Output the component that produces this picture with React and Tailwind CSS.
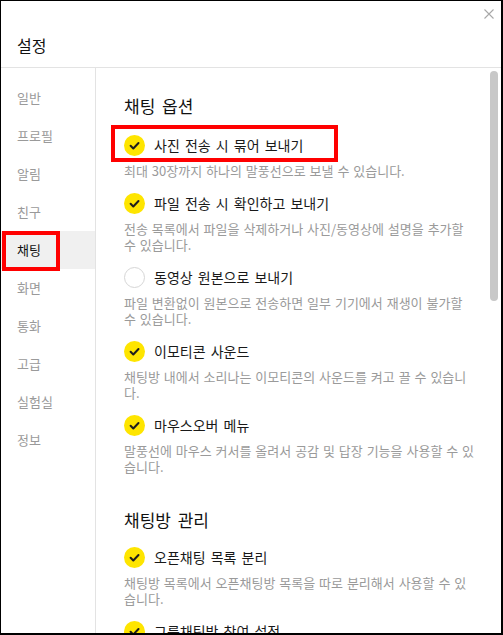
import React from "react";

const FONT = { fontFamily: '"Noto Sans CJK KR", "Noto Sans", sans-serif' };

function Check({ on }) {
  if (!on) {
    return <div className="w-[21px] h-[21px] rounded-full border border-[#d6d6d6] bg-white shrink-0" />;
  }
  return (
    <div className="w-[21px] h-[21px] rounded-full bg-[#fee500] shrink-0 flex items-center justify-center">
      <svg width="21" height="21" viewBox="0 0 21 21">
        <path d="M6.6 10.8 L9.3 13.5 L14.5 8" fill="none" stroke="#1e1e1e" strokeWidth="2" strokeLinecap="round" strokeLinejoin="round" />
      </svg>
    </div>
  );
}

function Option({ on, label, desc, boxed, first }) {
  return (
    <div className={first ? "" : "mt-[14px]"}>
      <div className="relative flex items-center h-[20px]">
        <Check on={on} />
        <span className="ml-[9px] text-[14px] leading-[20px] text-[#191919] whitespace-nowrap [word-spacing:2px]">{label}</span>
        {boxed && (
          <div className="absolute left-[-13px] top-[-10px] w-[227px] h-[37px] border-4 border-[#ff0000]" />
        )}
      </div>
      {desc && (
        <div className="mt-[8px] text-[13px] leading-[16px] text-[#9a9a9a] whitespace-nowrap [word-spacing:1px]">
          {desc.map((l, i) => (
            <div key={i}>{l}</div>
          ))}
        </div>
      )}
    </div>
  );
}

const menu = ["일반", "프로필", "알림", "친구", "채팅", "화면", "통화", "고급", "실험실", "정보"];

export default function App() {
  return (
    <div
      style={FONT}
      className="w-[503px] h-[635px] bg-white border-black border-l border-t border-r-2 border-b-2 flex flex-col overflow-hidden"
    >
      <div className="h-[67px] shrink-0 border-b border-[#e3e3e3] flex flex-col">
        <div className="flex justify-end pt-[8px] pr-[7px]">
          <svg width="10" height="10" viewBox="0 0 10 10">
            <path d="M0.5 0.5 L9.5 9.5 M9.5 0.5 L0.5 9.5" stroke="#a8a8a8" strokeWidth="1.1" />
          </svg>
        </div>
        <div className="pl-[16px] mt-[15px] text-[16px] leading-[22px] text-[#111]">설정</div>
      </div>
      <div className="flex flex-1 min-h-0">
        <div className="w-[95px] shrink-0 border-r border-[#e3e3e3] pt-[11px]">
          {menu.map((m) => {
            const sel = m === "채팅";
            return (
              <div
                key={m}
                className={
                  "relative h-[38px] flex items-center pl-[16px] text-[13px] " +
                  (sel ? "bg-[#f0f0f0] text-[#111]" : "text-[#9a9a9a]")
                }
              >
                {m}
                {sel && <div className="absolute left-[1px] top-0 w-[58px] h-[40px] border-4 border-[#ff0000]" />}
              </div>
            );
          })}
        </div>
        <div className="flex-1 flex min-w-0">
          <div className="flex-1 pl-[28px] pt-[26px] overflow-hidden">
            <div className="text-[17px] leading-[24px] text-[#111] [word-spacing:3px]">채팅 옵션</div>
            <div className="mt-[17px]">
              <Option first boxed on label="사진 전송 시 묶어 보내기" desc={["최대 30장까지 하나의 말풍선으로 보낼 수 있습니다."]} />
              <Option on label="파일 전송 시 확인하고 보내기" desc={["전송 목록에서 파일을 삭제하거나 사진/동영상에 설명을 추가할", "수 있습니다."]} />
              <Option on={false} label="동영상 원본으로 보내기" desc={["파일 변환없이 원본으로 전송하면 일부 기기에서 재생이 불가할", "수 있습니다."]} />
              <Option on label="이모티콘 사운드" desc={["채팅방 내에서 소리나는 이모티콘의 사운드를 켜고 끌 수 있습니", "다."]} />
              <Option on label="마우스오버 메뉴" desc={["말풍선에 마우스 커서를 올려서 공감 및 답장 기능을 사용할 수 있", "습니다."]} />
            </div>
            <div className="mt-[33px] text-[17px] leading-[24px] text-[#111] [word-spacing:3px]">채팅방 관리</div>
            <div className="mt-[15px]">
              <Option first on label="오픈채팅 목록 분리" desc={["채팅방 목록에서 오픈채팅방 목록을 따로 분리해서 사용할 수 있", "습니다."]} />
              <Option on label="그룹채팅방 참여 설정" desc={["채팅방 참여 시 설정을 변경할 수 있습니다."]} />
            </div>
          </div>
          <div className="w-[14px] shrink-0 pt-[3px] flex justify-center">
            <div className="w-[8px] h-[230px] rounded-full bg-[#c8c8c8]" />
          </div>
        </div>
      </div>
    </div>
  );
}
